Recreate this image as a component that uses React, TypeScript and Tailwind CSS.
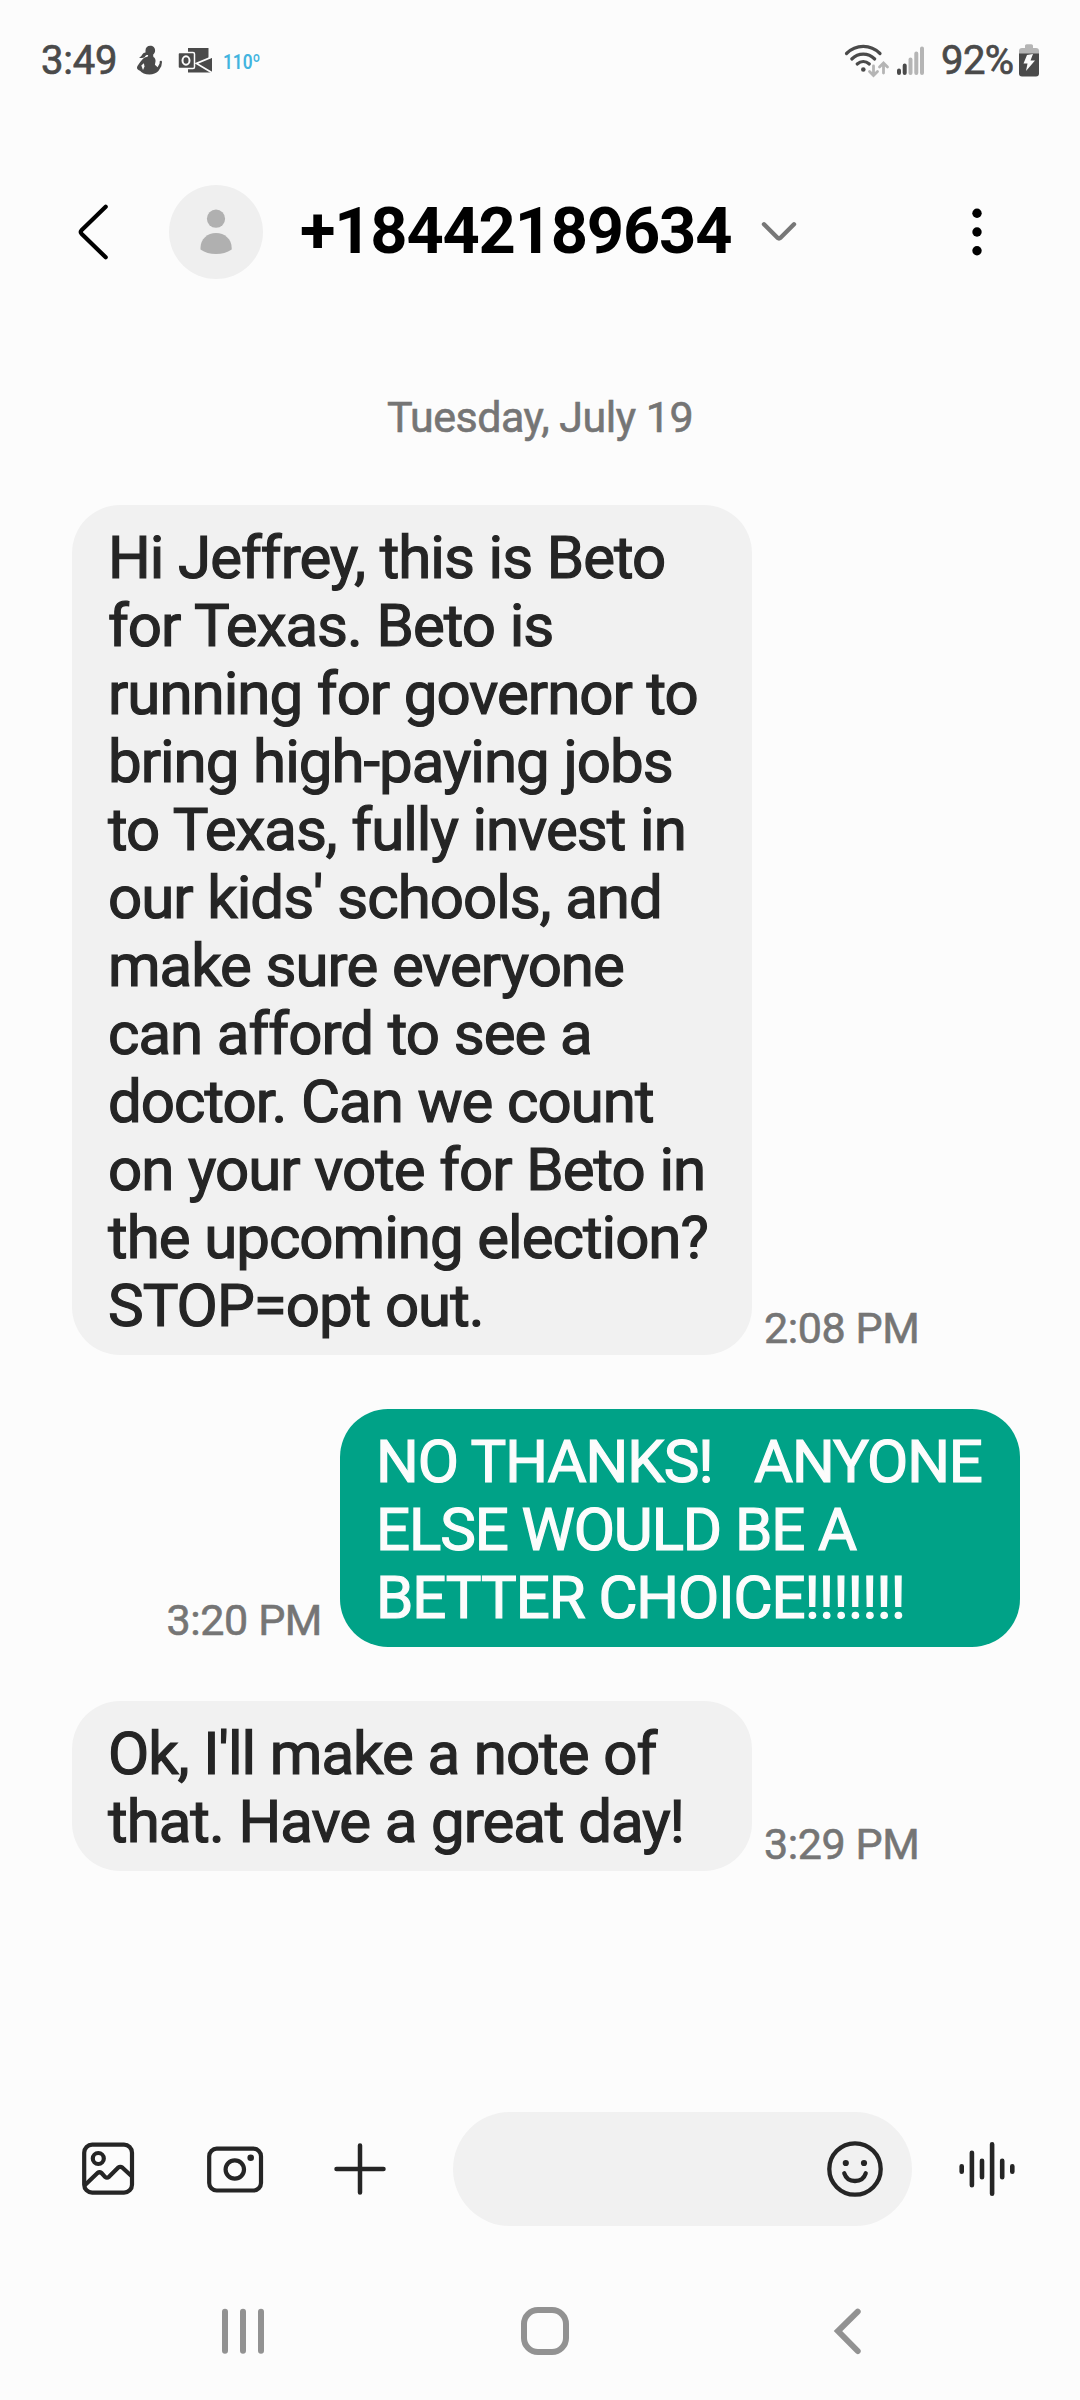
type Message = { id: number; mine: boolean; lines: string[]; time: string };

const messages: Message[] = [
  {
    id: 1,
    mine: false,
    time: '2:08 PM',
    lines: [
      'Hi Jeffrey, this is Beto',
      'for Texas. Beto is',
      'running for governor to',
      'bring high-paying jobs',
      'to Texas, fully invest in',
      "our kids' schools, and",
      'make sure everyone',
      'can afford to see a',
      'doctor. Can we count',
      'on your vote for Beto in',
      'the upcoming election?',
      'STOP=opt out.',
    ],
  },
  {
    id: 2,
    mine: true,
    time: '3:20 PM',
    lines: ['NO THANKS!   ANYONE', 'ELSE WOULD BE A', 'BETTER CHOICE!!!!!!!'],
  },
  {
    id: 3,
    mine: false,
    time: '3:29 PM',
    lines: ["Ok, I'll make a note of", 'that. Have a great day!'],
  },
];

function StatusBar() {
  return (
    <div className="flex h-[120px] shrink-0 items-center pl-[41px] pr-[41px] text-[#4a4a4a]">
      <span className="mt-[2px] w-[95px] text-[40px] leading-none tracking-[-0.2px] [-webkit-text-stroke:0.7px]">3:49</span>
      <svg className="h-[30px] w-[28px]" viewBox="0 0 28 30" fill="currentColor">
        <path d="M9.5 5.5C9.5 2.4 11.600 .8 14.200 .8c2.900 0 4.900 2 4.900 4.800 0 1.900-.7 3-2 4.200l.3 2.200c1.700 1 2.400 2.600 2.100 4.600l-.6 3.200 2.700 2.500 2-3.800.1-2.300c.6-1 2.400-.6 2.300.8l-.7 4.300-2.900 4.800c-2.200 2.300-5.200 3.400-8.900 3.400-4.500 0-7.700-1.300-9.500-3.700-1.500-.8-3.200-1.500-3-3.300.2-1.800 3.800-6.400 5.800-8.600 1.500-1.500 3.600-1.700 5-2.300l.4-1.600c-1.800-.2-2.500.3-3.500 2-1.400 1.300-3.300 1.400-5.700.6 2-.5 2.400-1.600 3.300-3 .8-1.300 1.800-2 3.200-2z" />
        <path d="M5.300 20.500l2.600-2.300.6 3.200-1.500 3.600z" fill="#fcfcfc" />
      </svg>
      <svg className="ml-[13px] h-[28px] w-[36px]" viewBox="0 0 36 28" fill="currentColor">
        <path d="M11 2h20.500v11L35 11.500v15H11z" />
        <path d="M36 10.500L19.500 17.500l16 9.500" fill="none" stroke="#fcfcfc" strokeWidth="1.800" />
        <rect x="1" y="6.500" width="16.500" height="16" rx="1.500" stroke="#fcfcfc" strokeWidth="1.500" />
        <ellipse cx="9" cy="14.500" rx="3.500" ry="4.200" fill="none" stroke="#fcfcfc" strokeWidth="2" />
      </svg>
      <span className="ml-[10px] mt-[4px] origin-left scale-x-[.82] text-[21px] font-semibold leading-none text-[#42b4df]">110º</span>
      <div className="ml-auto flex items-center">
        <svg className="h-[36px] w-[46px]" viewBox="0 0 46 36" fill="none" stroke="currentColor" strokeWidth="3.200" strokeLinecap="round">
          <path d="M2.500 11.500c9.500-9.500 24-9.500 33.500 0" />
          <path d="M7.800 17c6.700-6.500 16.200-6.500 22.900 0" />
          <path d="M13.200 22c3.700-3.300 8.400-3.300 12.100 0" />
          <circle cx="19.300" cy="27.500" r="2.300" fill="currentColor" stroke="none" />
          <g stroke="#b5b5b5" strokeWidth="2.800">
            <path d="M29.500 24v8.500M25.500 29.500l4 4 4-4M39.500 31v-9.500M35.500 25l4-4 4 4" />
          </g>
        </svg>
        <svg className="ml-[7px] h-[36px] w-[28px]" viewBox="0 0 28 36" strokeWidth="4" strokeLinecap="round" stroke="#b5b5b5">
          <path d="M2 28.500v2.500M7.700 23.500v7.500" stroke="#4a4a4a" />
          <path d="M13.500 17.500v13.500M19.300 11.500v19.500M25 6.500v24.500" />
        </svg>
        <span className="ml-[16px] mt-[2px] w-[74px] whitespace-nowrap text-[40px] leading-none tracking-[-0.6px] [-webkit-text-stroke:0.7px]">92%</span>
        <svg className="ml-[4px] mt-[2px] h-[34px] w-[20px]" viewBox="0 0 20 34">
          <path d="M0 12V7c0-2 1-3 3-3h3V2c0-1 .7-1.700 1.700-1.700h4.600c1 0 1.700.7 1.700 1.700v2h3c2 0 3 1 3 3v5z" fill="#b5b5b5" />
          <path d="M0 9.500h20v20c0 2-1 3-3 3H3c-2 0-3-1-3-3z" fill="#4a4a4a" />
          <path d="M8 11l6-1-2.500 6.500H16L7 27l1.500-7.500H4.500z" fill="#fcfcfc" />
        </svg>
      </div>
    </div>
  );
}

function Header() {
  return (
    <header className="flex h-[224px] shrink-0 items-center pl-[76px] text-black">
      <svg className="h-[60px] w-[36px]" viewBox="0 0 36 60" fill="none" stroke="currentColor" strokeWidth="4.200" strokeLinecap="round" strokeLinejoin="round">
        <path d="M29.700 4.700L5.500 28.300q-1.500 1.700 0 3.400L29.700 55.300" />
      </svg>
      <div className="ml-[57px] flex size-[94px] items-center justify-center rounded-full bg-[#efefef]">
        <svg className="size-[48px]" viewBox="0 0 48 48" fill="#b0b0b0">
          <circle cx="24" cy="10.700" r="9.100" />
          <path d="M8.500 41.500V40C8.500 31 15.500 25 24 25s15.700 6 15.700 15v1.500C35 44.500 30 46 24 46s-11-1.500-15.500-4.500z" />
        </svg>
      </div>
      <h1 className="ml-[37px] mt-[-2px] w-[434px] whitespace-nowrap text-[65px] font-bold leading-none tracking-[-1.2px]">+18442189634</h1>
      <svg className="ml-[25px] h-[24px] w-[40px]" viewBox="0 0 40 24" fill="none" stroke="#777777" strokeWidth="4.400" strokeLinecap="round" strokeLinejoin="round">
        <path d="M5 4.300l13.500 13.500q1.500 1.200 3 0L35 4.300" />
      </svg>
      <svg className="ml-[173px] h-[52px] w-[10px]" viewBox="0 0 10 52" fill="currentColor">
        <circle cx="5" cy="7.200" r="4.700" />
        <circle cx="5" cy="26" r="4.700" />
        <circle cx="5" cy="44.700" r="4.700" />
      </svg>
    </header>
  );
}

function Bubble({ message }: { message: Message }) {
  return (
    <div className={message.mine ? 'flex flex-row-reverse items-end' : 'flex items-end'}>
      <div
        className={
          message.mine
            ? 'w-[680px] rounded-[48px] bg-[#00a287] pb-[15px] pl-[36px] pt-[19px] tracking-[-1.1px] text-[#fcfcfc]'
            : 'w-[680px] rounded-[48px] bg-[#f1f1f1] pb-[15px] pl-[36px] pt-[19px] tracking-[-1px] [word-spacing:0.8px] text-[#252525]'
        }
      >
        {message.lines.map((line) => (
          <p key={line} className="whitespace-pre text-[60px] leading-[68px] [-webkit-text-stroke:1.2px]">
            {line}
          </p>
        ))}
      </div>
      <span
        className={
          message.mine
            ? 'mr-[18px] pb-[4px] text-[43px] leading-[46px] tracking-[-0.4px] text-[#757575] [-webkit-text-stroke:0.6px]'
            : 'ml-[12px] pb-[4px] text-[43px] leading-[46px] tracking-[-0.4px] text-[#757575] [-webkit-text-stroke:0.6px]'
        }
      >
        {message.time}
      </span>
    </div>
  );
}

function Composer() {
  return (
    <div className="flex h-[114px] shrink-0 items-center pl-[80px] text-[#252525]">
      <svg className="size-[56px]" viewBox="0 0 56 56" fill="none" stroke="currentColor" strokeWidth="4.200" strokeLinejoin="round">
        <rect x="4.200" y="3.700" width="47.800" height="48" rx="8" />
        <circle cx="18.300" cy="17.500" r="5.500" />
        <path d="M4.500 44.500L17.500 32q2-1.500 4 0l3.500 3.800q2 1.600 4 0L38 26.700q2.300-1.800 4.500 0L52 35.500" />
      </svg>
      <svg className="ml-[69px] h-[52px] w-[60px]" viewBox="0 0 60 52" fill="none" stroke="currentColor" strokeWidth="4.200">
        <rect x="4.200" y="5.700" width="51.800" height="41.800" rx="7.500" />
        <circle cx="29.800" cy="26.500" r="9.200" />
        <circle cx="45.700" cy="14.800" r="3.300" fill="currentColor" stroke="none" />
      </svg>
      <svg className="ml-[67px] size-[56px]" viewBox="0 0 56 56" stroke="currentColor" strokeWidth="4.500" strokeLinecap="round">
        <path d="M4.500 28h47M28 4.500v47" />
      </svg>
      <div className="ml-[65px] flex h-[114px] w-[459px] items-center justify-end rounded-full bg-[#f1f1f1] pr-[27px]">
        <svg className="size-[60px]" viewBox="0 0 60 60" fill="none" stroke="currentColor" strokeWidth="4.300" strokeLinecap="round">
          <circle cx="30" cy="30" r="25.700" />
          <circle cx="20.800" cy="24" r="3.100" fill="currentColor" stroke="none" />
          <circle cx="39" cy="24" r="3.100" fill="currentColor" stroke="none" />
          <path d="M19.300 34.300c1.600 4.900 5.800 7.700 10.700 7.700s9.100-2.800 10.700-7.700" />
        </svg>
      </div>
      <svg className="ml-[45px] h-[60px] w-[60px]" viewBox="0 0 60 60" stroke="currentColor" strokeWidth="4.600" strokeLinecap="round">
        <path d="M4.700 27.300v5.400M14.900 13.700v32.600M25 21.700v16.600M35.100 5.300v49.400M45.200 21.700v16.600M55.300 27.300v5.400" />
      </svg>
    </div>
  );
}

function NavBar() {
  return (
    <nav className="mt-[75px] flex h-[60px] shrink-0 items-center pl-[220px] text-[#929292]">
      <svg className="h-[60px] w-[46px]" viewBox="0 0 46 60" stroke="currentColor" strokeWidth="6" strokeLinecap="round">
        <path d="M5 10.700v39M23 10.700v39M41 10.700v39" />
      </svg>
      <svg className="ml-[254px] h-[60px] w-[50px]" viewBox="0 0 50 60" fill="none" stroke="currentColor" strokeWidth="6">
        <rect x="4" y="9" width="42" height="42" rx="14" />
      </svg>
      <svg className="ml-[262px] h-[60px] w-[32px]" viewBox="0 0 32 60" fill="none" stroke="currentColor" strokeWidth="6" strokeLinecap="round">
        <path d="M25.700 10.700L6 30l19.700 20" />
      </svg>
    </nav>
  );
}

export default function App() {
  return (
    <div className="flex h-[2400px] w-[1080px] flex-col overflow-hidden bg-[#fcfcfc] font-['Roboto',sans-serif]">
      <StatusBar />
      <Header />
      <main className="flex flex-1 flex-col pt-[48px]">
        <p className="mb-[63px] text-center text-[43px] leading-[50px] tracking-[-0.5px] text-[#757575] [-webkit-text-stroke:0.6px]">Tuesday, July 19</p>
        <div className="flex flex-col gap-[54px] pl-[72px] pr-[60px]">
          {messages.map((message) => (
            <Bubble key={message.id} message={message} />
          ))}
        </div>
      </main>
      <Composer />
      <NavBar />
      <div className="h-[39px] shrink-0" />
    </div>
  );
}
